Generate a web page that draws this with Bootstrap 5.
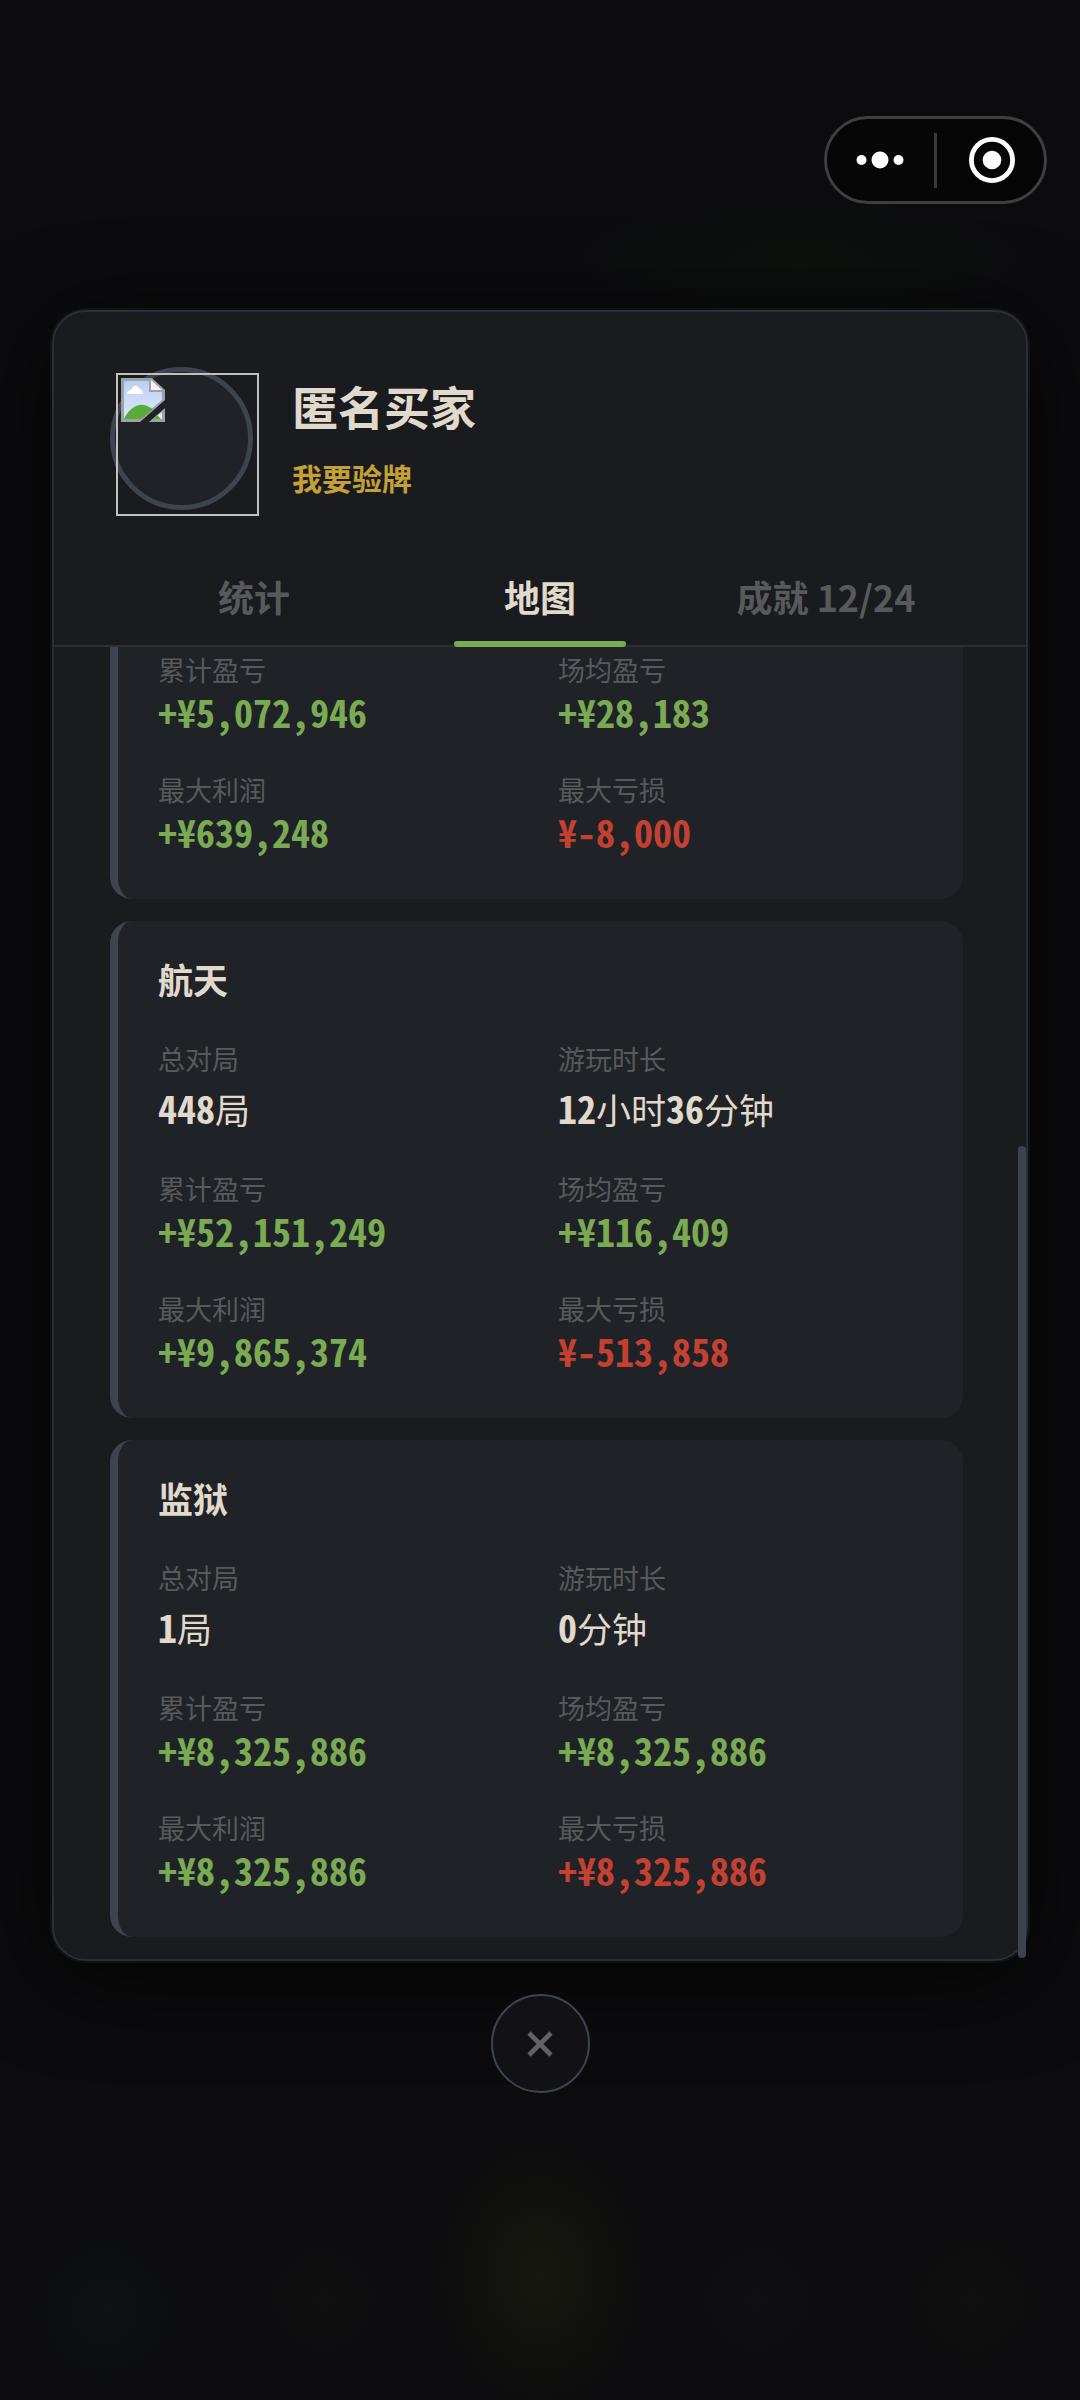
<!DOCTYPE html>
<html lang="zh-CN">
<head>
<meta charset="utf-8">
<meta name="viewport" content="width=device-width, initial-scale=1">
<title>匿名买家</title>
<link rel="stylesheet" href="https://cdn.jsdelivr.net/npm/bootstrap@5.3.0/dist/css/bootstrap.min.css">
<style>
  body {
    min-height: 100vh;
    background-color: #0c0c0e;
    background-image:
      radial-gradient(ellipse 110px 140px at 50% 2275px, #17180f, transparent),
      radial-gradient(circle 80px at 105px 2310px, #0f1216, transparent),
      radial-gradient(circle 80px at 323px 2300px, #101011, transparent),
      radial-gradient(circle 80px at 757px 2300px, #101013, transparent),
      radial-gradient(circle 80px at 973px 2300px, #101010, transparent),
      radial-gradient(ellipse 240px 60px at 800px 258px, #0e110e, transparent);
    color: #e0d9cc;
    font-family: "Noto Sans CJK SC", sans-serif;
  }
  .top-zone { padding: 116px 33px 106px; }
  .capsule {
    width: 223px; height: 88px; gap: 2px;
    background: #060607;
    border: 3px solid #3f3f40;
  }
  .capsule button { background: none; border: 0; padding: 0; flex: 1; height: 100%; }
  .capsule .divider { width: 3px; height: 55px; background: #39393b; }
  .panel {
    margin: 0 52px;
    background: #1a1b1f;
    border: 2px solid #2b2e35;
    border-radius: 34px;
    box-shadow: 0 0 0 2px rgba(60, 64, 72, .18), 0 16px 90px rgba(0, 0, 0, .75);
  }
  .profile { padding: 55px 56px 0; gap: 39px; }
  .avatar {
    width: 143px; height: 143px;
    border: 5px solid #3d434f;
    background: #1f2226;
  }
  .avatar svg { display: block; margin: 1px; overflow: visible; }
  .nick { font-size: 46px; line-height: 68px; font-weight: 700; }
  .motto { font-size: 30px; line-height: 44px; font-weight: 700; color: #c5a035; margin-top: 16px; }
  .tab-row { padding: 50px 56px 0; margin: 0 1px; border-bottom: 2px solid #2b2e33; }
  .tab-row .nav-link {
    position: relative;
    padding: 10px 0 23px;
    font-size: 36px; line-height: 52px; font-weight: 700;
    color: #58595d;
  }
  .tab-row .nav-link.active { color: #e0d9cc; }
  .tab-row .nav-link.active::after {
    content: ""; position: absolute; left: 20%; right: 20%; bottom: -2px;
    height: 6px; border-radius: 3px; background: #7aaa52;
  }
  .maps { padding: 0 63px 22px 56px; gap: 22px; }
  .map-card {
    background: #1f2226;
    border-left: 8px solid #3d434f;
    border-radius: 22px;
    padding: 32px 5px 46px 40px;
  }
  .map-card.continued { border-top-left-radius: 0; border-top-right-radius: 0; padding-top: 3px; }
  .map-card h2 { font-size: 35px; line-height: 52px; font-weight: 700; margin: 0 0 34px; }
  .stats { display: grid; grid-template-columns: 1fr 1fr; row-gap: 37px; margin: 0; }
  .stats dt { font-size: 27px; line-height: 40px; font-weight: 400; color: #58595d; }
  .stats dd {
    margin: 0;
    font-family: "Noto Sans Mono CJK SC", "DejaVu Sans Mono", "Noto Sans CJK SC", monospace;
    font-size: 38px; line-height: 43px; font-weight: 700;
  }
  .stats dd.plain { line-height: 46px; margin-top: 6px; }
  .unit { font-family: "Noto Sans CJK SC", sans-serif; font-size: 35px; font-weight: 400; }
  .gain { color: #7aaa52; }
  .loss { color: #c44131; }
  .thumb {
    position: absolute; right: 0; top: 499px; bottom: 1px; width: 8px;
    border-radius: 4px; background: #3d434f;
  }
  .close-btn {
    width: 99px; height: 99px; margin-top: 33px; padding: 0;
    background: #121216; border: 2px solid #3d434f;
  }
</style>
</head>
<body>
<header class="top-zone d-flex justify-content-end">
  <div class="capsule rounded-pill d-flex align-items-center">
    <button type="button" aria-label="更多" class="d-flex align-items-center justify-content-center">
      <svg width="48" height="20" viewBox="0 0 48 20" fill="#fff"><circle cx="5.5" cy="10" r="5"/><circle cx="24" cy="10" r="8.5"/><circle cx="42.5" cy="10" r="5"/></svg>
    </button>
    <span class="divider"></span>
    <button type="button" aria-label="关闭小程序" class="d-flex align-items-center justify-content-center">
      <svg width="46" height="46" viewBox="0 0 46 46"><circle cx="23" cy="23" r="20.6" fill="none" stroke="#fff" stroke-width="4.8"/><circle cx="23" cy="23" r="9.3" fill="#fff"/></svg>
    </button>
  </div>
</header>

<main>
  <section class="panel">
    <div class="profile d-flex">
      <div class="avatar rounded-circle flex-shrink-0">
        <svg width="143" height="143" viewBox="0 0 143 143" aria-hidden="true">
          <defs><linearGradient id="sky" x2="0" y2="1"><stop stop-color="#bccff4"/><stop offset="1" stop-color="#dde8fb"/></linearGradient></defs>
          <rect x="1" y="1" width="141" height="141" fill="none" stroke="#c0c0c0" stroke-width="2"/>
          <path d="M5 5H36L49 17V27L24 49H5Z" fill="#a0a1a3"/>
          <path d="M8 8H33V19H46V27L24 46H8Z" fill="url(#sky)"/>
          <path d="M8 46C13 35 24 28 33 34L37 36L25 46Z" fill="#57ad38"/>
          <path d="M11 21Q11 17 15 17Q19 9 23 15Q27 17 27 21Z" fill="#fff"/>
          <path d="M35 7L46 17H35Z" fill="#f3f3f3"/>
          <path d="M49 35V49H33Z" fill="#a0a1a3"/>
          <path d="M46 39V46H37Z" fill="#e4edfb"/>
          <path d="M37 46L41 42L45 46Z" fill="#57ad38"/>
        </svg>
      </div>
      <div class="pt-1">
        <div class="nick">匿名买家</div>
        <div class="motto">我要验牌</div>
      </div>
    </div>
    <nav class="tab-row nav nav-justified flex-nowrap">
      <a class="nav-link" href="#stats">统计</a>
      <a class="nav-link active" href="#maps" aria-current="page">地图</a>
      <a class="nav-link" href="#medals">成就 12/24</a>
    </nav>
    <div class="position-relative" id="maps">
      <div class="maps d-flex flex-column">
        <article class="map-card continued">
          <dl class="stats">
            <div><dt>累计盈亏</dt><dd class="gain">+¥5,072,946</dd></div>
            <div><dt>场均盈亏</dt><dd class="gain">+¥28,183</dd></div>
            <div><dt>最大利润</dt><dd class="gain">+¥639,248</dd></div>
            <div><dt>最大亏损</dt><dd class="loss">¥-8,000</dd></div>
          </dl>
        </article>
        <article class="map-card">
          <h2>航天</h2>
          <dl class="stats">
            <div><dt>总对局</dt><dd class="plain">448<span class="unit">局</span></dd></div>
            <div><dt>游玩时长</dt><dd class="plain">12<span class="unit">小时</span>36<span class="unit">分钟</span></dd></div>
            <div><dt>累计盈亏</dt><dd class="gain">+¥52,151,249</dd></div>
            <div><dt>场均盈亏</dt><dd class="gain">+¥116,409</dd></div>
            <div><dt>最大利润</dt><dd class="gain">+¥9,865,374</dd></div>
            <div><dt>最大亏损</dt><dd class="loss">¥-513,858</dd></div>
          </dl>
        </article>
        <article class="map-card">
          <h2>监狱</h2>
          <dl class="stats">
            <div><dt>总对局</dt><dd class="plain">1<span class="unit">局</span></dd></div>
            <div><dt>游玩时长</dt><dd class="plain">0<span class="unit">分钟</span></dd></div>
            <div><dt>累计盈亏</dt><dd class="gain">+¥8,325,886</dd></div>
            <div><dt>场均盈亏</dt><dd class="gain">+¥8,325,886</dd></div>
            <div><dt>最大利润</dt><dd class="gain">+¥8,325,886</dd></div>
            <div><dt>最大亏损</dt><dd class="loss">+¥8,325,886</dd></div>
          </dl>
        </article>
      </div>
      <span class="thumb"></span>
    </div>
  </section>
  <div class="d-flex justify-content-center">
    <button type="button" class="close-btn rounded-circle d-flex align-items-center justify-content-center" aria-label="关闭">
      <svg width="26" height="26" viewBox="0 0 26 26" stroke="#626266" stroke-width="4.6"><path d="M2 2L24 24M24 2L2 24"/></svg>
    </button>
  </div>
</main>
<script src="https://cdn.jsdelivr.net/npm/bootstrap@5.3.0/dist/js/bootstrap.bundle.min.js"></script>
</body>
</html>
